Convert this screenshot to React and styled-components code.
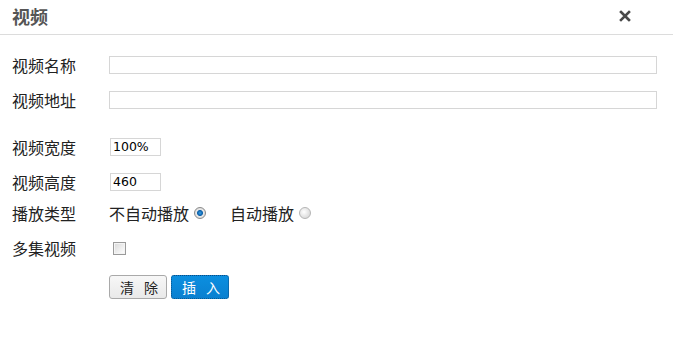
import React from "react";
import styled, { createGlobalStyle } from "styled-components";

const Global = createGlobalStyle`
  html, body { margin: 0; padding: 0; background: #fff; }
  body { font-family: "Noto Sans CJK SC", "DejaVu Sans", sans-serif; }
`;

const Dialog = styled.div`
  width: 673px;
  height: 354px;
  background: #fff;
  box-sizing: border-box;
`;

const Header = styled.div`
  height: 35px;
  box-sizing: border-box;
  border-bottom: 1px solid #dcdcdc;
  display: flex;
  align-items: center;
  justify-content: space-between;
  padding: 0 42px 0 12px;
`;

const Title = styled.div`
  font-size: 18px;
  font-weight: bold;
  color: #555;
  line-height: 1;
  margin-top: -2px;
`;

const Close = styled.svg`
  width: 12px;
  height: 12px;
  margin-top: -2px;
`;

const Body = styled.div`
  padding: 12px 16px 0 12px;
`;

const Row = styled.div`
  display: flex;
  align-items: center;
  height: ${(p) => p.$h || 35}px;
  margin-top: ${(p) => p.$mt || 0}px;
`;

const Label = styled.div`
  width: 97px;
  flex: none;
  font-size: 16px;
  color: #222;
  line-height: 1;
`;

const TextInput = styled.input`
  box-sizing: border-box;
  height: 18px;
  width: ${(p) => (p.$w ? `${p.$w}px` : "auto")};
  flex: ${(p) => (p.$w ? "none" : "1")};
  border: 1px solid #d6d6d6;
  outline: none;
  padding: 0 2px;
  font-family: "DejaVu Sans", sans-serif;
  font-size: 12.5px;
  color: #000;
  margin-left: ${(p) => p.$ml || 0}px;
`;

const Option = styled.label`
  display: flex;
  align-items: center;
  font-size: 16px;
  color: #222;
  line-height: 1;
  margin-right: ${(p) => p.$mr || 0}px;
`;

const Radio = styled.span`
  display: inline-block;
  box-sizing: border-box;
  width: 12px;
  height: 12px;
  border-radius: 50%;
  margin-left: 5px;
  border: 1px solid ${(p) => (p.$on ? "#8a8a8a" : "#b5b5b5")};
  background: ${(p) =>
    p.$on
      ? "radial-gradient(circle at 50% 50%, #3aa0e8 0, #0a5fa8 2.5px, #e8e8e8 3.5px, #d0d0d0 100%)"
      : "radial-gradient(circle at 40% 40%, #ffffff 0, #e6e6e6 50%, #cfcfcf 100%)"};
`;

const Check = styled.span`
  display: inline-block;
  box-sizing: border-box;
  width: 13px;
  height: 13px;
  margin-left: 4px;
  border: 1px solid #9a9a9a;
  background: linear-gradient(135deg, #d8d8d8 0%, #f0f0f0 60%, #ffffff 100%);
  box-shadow: inset 0 0 0 1px #f4f4f4;
`;

const Button = styled.button`
  box-sizing: border-box;
  width: 58px;
  height: 24px;
  margin-right: 4px;
  border-radius: 3px;
  font-family: "Noto Sans CJK SC", sans-serif;
  font-size: 14px;
  line-height: 1;
  padding: 0 0 0 10px;
  text-align: left;
  white-space: nowrap;
  overflow: hidden;
  letter-spacing: 10px;
  cursor: pointer;
  color: ${(p) => (p.$primary ? "#fff" : "#222")};
  border: 1px ${(p) => (p.$primary ? "dotted #0a4f86" : "solid #a9a9a9")};
  background: ${(p) =>
    p.$primary
      ? "linear-gradient(#0b8fe0, #0a80d0)"
      : "linear-gradient(#f7f7f7, #e9e9e9)"};
`;

export default function App() {
  return (
    <>
      <Global />
      <Dialog>
        <Header>
          <Title>视频</Title>
          <Close viewBox="0 0 12 12">
            <path d="M2 2 L10 10 M10 2 L2 10" stroke="#4a4a4a" strokeWidth="2.6" strokeLinecap="square" />
          </Close>
        </Header>
        <Body>
          <Row>
            <Label>视频名称</Label>
            <TextInput />
          </Row>
          <Row>
            <Label>视频地址</Label>
            <TextInput />
          </Row>
          <Row $mt={12}>
            <Label>视频宽度</Label>
            <TextInput $w={51} $ml={1} defaultValue="100%" />
          </Row>
          <Row>
            <Label>视频高度</Label>
            <TextInput $w={51} $ml={1} defaultValue="460" />
          </Row>
          <Row $h={28}>
            <Label>播放类型</Label>
            <Option $mr={24}>
              不自动播放<Radio $on />
            </Option>
            <Option>
              自动播放<Radio />
            </Option>
          </Row>
          <Row $h={42}>
            <Label>多集视频</Label>
            <Check />
          </Row>
          <Row $h={24} $mt={6}>
            <Label />
            <Button>清除</Button>
            <Button $primary>插入</Button>
          </Row>
        </Body>
      </Dialog>
    </>
  );
}
